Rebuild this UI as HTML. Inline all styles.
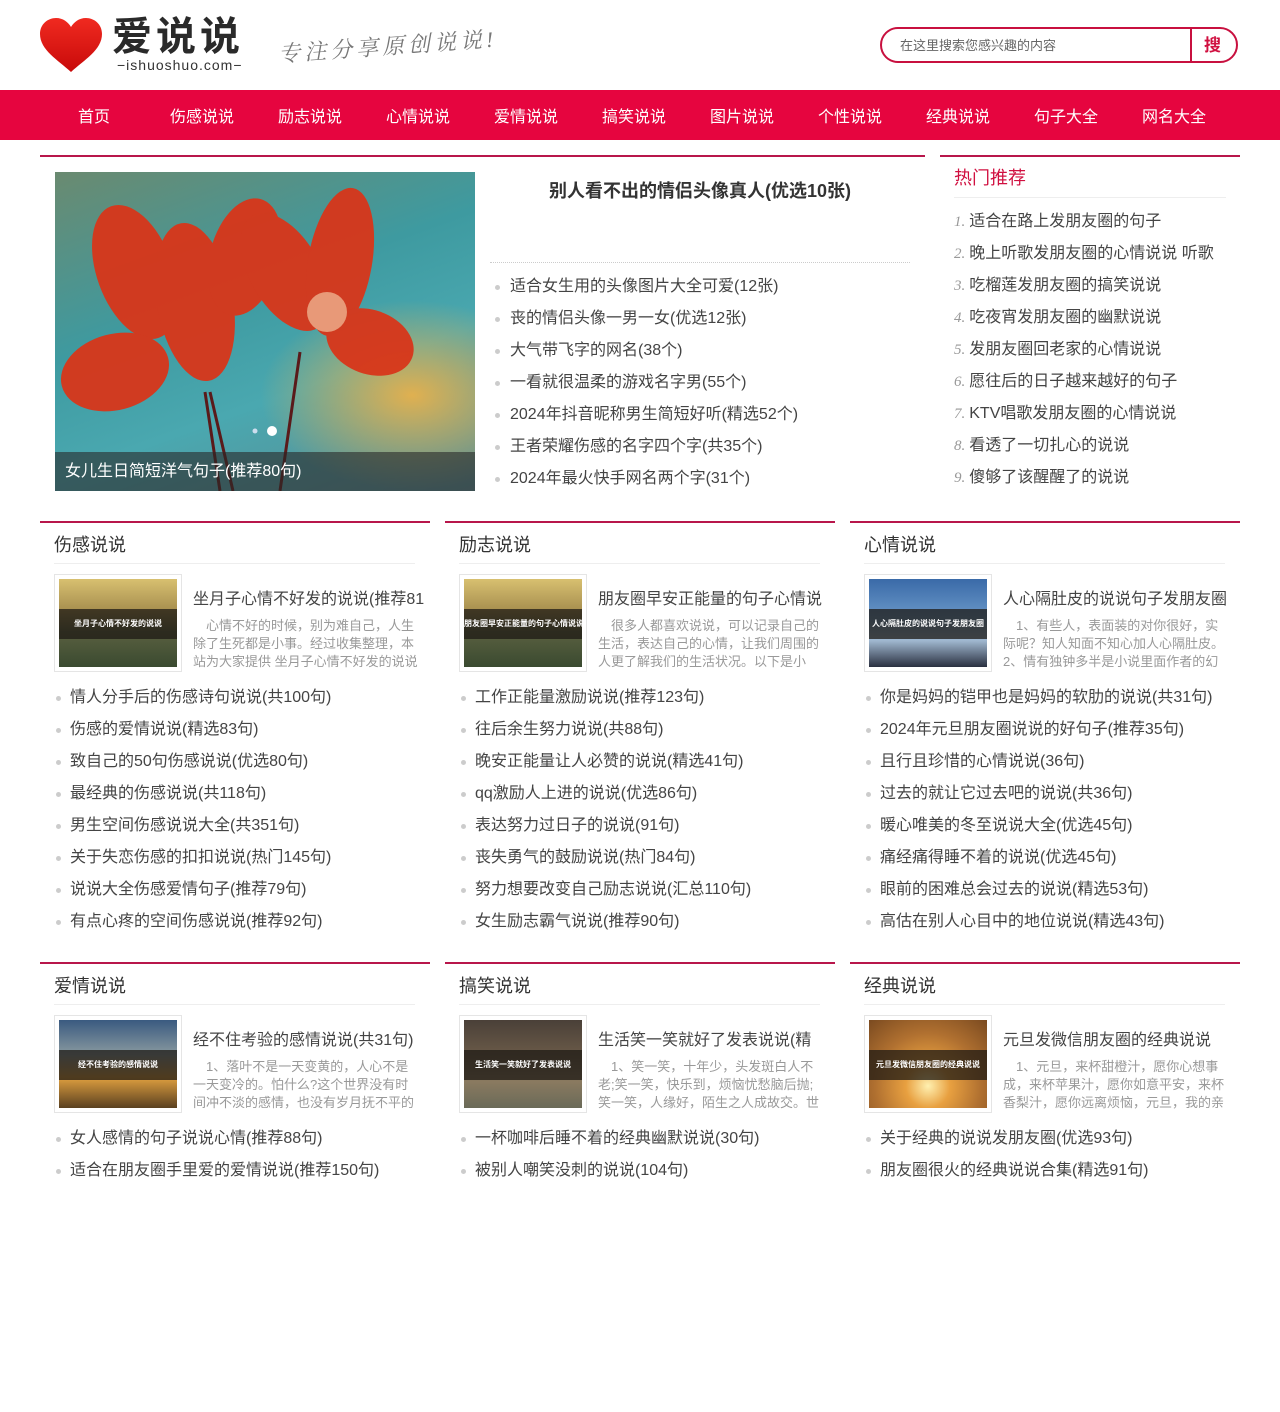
<!DOCTYPE html>
<html><head><meta charset="utf-8"><style>
*{margin:0;padding:0;box-sizing:border-box}
body{width:1280px;height:1167px;overflow:hidden;background:#fff;font-family:"Liberation Sans","Noto Sans CJK SC",sans-serif;color:#444;position:relative}
.a{position:absolute;white-space:nowrap}
.nav{position:absolute;left:0;top:90px;width:1280px;height:50px;background:#e6053f}
.nav span{position:absolute;top:3px;line-height:50px;color:#fff;font-size:16px;transform:translateX(-50%)}
.sec{position:absolute;width:390px;height:450px;border-top:2px solid #b8164b;overflow:hidden}
.sec h3{position:absolute;left:14px;top:10px;font-size:18px;font-weight:normal;color:#333;line-height:24px}
.sec .dv{position:absolute;left:14px;top:40px;width:361px;height:1px;background:#eee}
.th{position:absolute;left:14px;top:51px;width:128px;height:98px;border:1px solid #e5e5e5;padding:4px}
.th div{width:100%;height:100%;position:relative;overflow:hidden}
.th b{position:absolute;left:0;right:0;top:30px;height:30px;background:rgba(30,25,20,.75);color:#fff;font-size:8px;line-height:30px;text-align:center;font-weight:bold;white-space:nowrap;overflow:hidden}
.sec .t{position:absolute;left:153px;top:62px;font-size:16px;color:#444;width:232px;overflow:hidden;white-space:nowrap}
.sec .d{position:absolute;left:153px;top:94px;width:228px;font-size:13px;line-height:18px;color:#999;height:54px;overflow:hidden}
.sec ul{position:absolute;left:14px;top:159px;list-style:none}
.sec li{height:32px;line-height:32px;font-size:16px;color:#444;padding-left:16px;position:relative;white-space:nowrap}
.sec li:before{content:"";position:absolute;left:2px;top:14px;width:5px;height:5px;border-radius:50%;background:#ccc}
.ml li{height:32px;line-height:32px;font-size:16px;color:#444;padding-left:20px;position:relative;list-style:none;white-space:nowrap}
.ml li:before{content:"";position:absolute;left:5px;top:14px;width:5px;height:5px;border-radius:50%;background:#ccc}
.hl li{list-style:none;height:32px;line-height:32px;font-size:16px;color:#444;white-space:nowrap}
.hl i{font-family:"Liberation Serif",serif;color:#999;font-size:15px;margin-right:4px}
</style></head><body>
<svg class="a" style="left:38px;top:16px" width="66" height="58" viewBox="0 0 66 58"><defs><linearGradient id="hg" x1="0" y1="0" x2="0" y2="1"><stop offset="0" stop-color="#f02a20"/><stop offset="1" stop-color="#c80a0a"/></linearGradient></defs><path d="M33 56 C20 44 2 34 2 18 C2 8 10 2 18 2 C25 2 30 6 33 11 C36 6 41 2 48 2 C56 2 64 8 64 18 C64 34 46 44 33 56Z" fill="url(#hg)"/></svg>
<div class="a" style="left:112px;top:14px;font-size:40px;font-weight:bold;color:#2a2a2a;letter-spacing:4px;line-height:46px">爱说说</div>
<div class="a" style="left:117px;top:57px;font-size:14px;color:#333;line-height:16px;letter-spacing:1px">−ishuoshuo.com−</div>
<div class="a" style="left:278px;top:30px;font-size:22px;color:#777;font-style:italic;letter-spacing:4px;transform:rotate(-4deg);font-family:'Liberation Serif','Noto Serif CJK SC',serif">专注分享原创说说!</div>
<div class="a" style="left:880px;top:27px;width:358px;height:36px;border:2px solid #c8103f;border-radius:18px"></div>
<div class="a" style="left:1190px;top:29px;width:2px;height:32px;background:#c8103f"></div>
<div class="a" style="left:900px;top:37px;font-size:13px;color:#666;line-height:18px">在这里搜索您感兴趣的内容</div>
<div class="a" style="left:1204px;top:35px;font-size:17px;color:#d01040;font-weight:bold;line-height:22px">搜</div>
<div class="nav">
<span style="left:94px">首页</span><span style="left:202px">伤感说说</span><span style="left:310px">励志说说</span><span style="left:418px">心情说说</span><span style="left:526px">爱情说说</span><span style="left:634px">搞笑说说</span><span style="left:742px">图片说说</span><span style="left:850px">个性说说</span><span style="left:958px">经典说说</span><span style="left:1066px">句子大全</span><span style="left:1174px">网名大全</span>
</div>
<div class="a" style="left:40px;top:155px;width:885px;height:2px;background:#b8164b"></div>
<div class="a" style="left:940px;top:155px;width:300px;height:2px;background:#b8164b"></div>
<div class="a" style="left:55px;top:172px;width:420px;height:319px;overflow:hidden;background:radial-gradient(ellipse at 85% 70%,#e0b050 0,rgba(224,176,80,0) 30%),linear-gradient(160deg,#6a8a70 0%,#3e9aa0 40%,#4aa8b0 65%,#5a8a90 100%)">
<svg width="420" height="319" style="position:absolute;left:0;top:0"><g fill="#d8361a" opacity=".95"><ellipse cx="80" cy="100" rx="38" ry="70" transform="rotate(-20 80 100)"/><ellipse cx="140" cy="130" rx="38" ry="80" transform="rotate(-10 140 130)"/><ellipse cx="190" cy="85" rx="35" ry="60" transform="rotate(15 190 85)"/><ellipse cx="230" cy="100" rx="35" ry="65" transform="rotate(-30 230 100)"/><ellipse cx="285" cy="90" rx="32" ry="75" transform="rotate(10 285 90)"/><ellipse cx="315" cy="170" rx="45" ry="32" transform="rotate(20 315 170)"/><ellipse cx="60" cy="200" rx="55" ry="38" transform="rotate(-15 60 200)"/></g><path d="M150 220 L165 319 M155 220 L178 319 M245 180 L225 319" stroke="#5a1a1a" stroke-width="3"/><circle cx="272" cy="140" r="20" fill="#fff8d0" opacity=".5"/><circle cx="217" cy="259" r="5" fill="#fff"/><circle cx="200" cy="259" r="2.5" fill="#cde"/></svg>
<div style="position:absolute;left:0;bottom:0;width:420px;height:39px;background:rgba(40,40,40,.6);color:#fff;font-size:16px;line-height:39px;padding-left:10px">女儿生日简短洋气句子(推荐80句)</div>
</div>
<div class="a" style="left:490px;top:178px;width:420px;text-align:center;font-size:18px;font-weight:bold;color:#333;line-height:26px">别人看不出的情侣头像真人(优选10张)</div>
<div class="a" style="left:490px;top:262px;width:420px;border-top:1px dotted #ccc"></div>
<ul class="a ml" style="left:490px;top:271px">
<li>适合女生用的头像图片大全可爱(12张)</li><li>丧的情侣头像一男一女(优选12张)</li><li>大气带飞字的网名(38个)</li><li>一看就很温柔的游戏名字男(55个)</li><li>2024年抖音昵称男生简短好听(精选52个)</li><li>王者荣耀伤感的名字四个字(共35个)</li><li>2024年最火快手网名两个字(31个)</li>
</ul>
<div class="a" style="left:954px;top:165px;font-size:18px;color:#d01040;line-height:26px">热门推荐</div>
<div class="a" style="left:954px;top:197px;width:272px;height:1px;background:#eee"></div>
<ul class="a hl" style="left:954px;top:206px">
<li><i>1.</i>适合在路上发朋友圈的句子</li><li><i>2.</i>晚上听歌发朋友圈的心情说说 听歌</li><li><i>3.</i>吃榴莲发朋友圈的搞笑说说</li><li><i>4.</i>吃夜宵发朋友圈的幽默说说</li><li><i>5.</i>发朋友圈回老家的心情说说</li><li><i>6.</i>愿往后的日子越来越好的句子</li><li><i>7.</i>KTV唱歌发朋友圈的心情说说</li><li><i>8.</i>看透了一切扎心的说说</li><li><i>9.</i>傻够了该醒醒了的说说</li>
</ul>
<div class="sec" style="left:40px;top:521px"><h3>伤感说说</h3><div class="dv"></div>
<div class="th"><div style="background:linear-gradient(180deg,#d8c070 0%,#a89050 35%,#5a6040 60%,#3a4a30 100%)"><b>坐月子心情不好发的说说</b></div></div>
<div class="t">坐月子心情不好发的说说(推荐81</div>
<div class="d">　心情不好的时候，别为难自己，人生除了生死都是小事。经过收集整理，本站为大家提供 坐月子心情不好发的说说</div>
<ul><li>情人分手后的伤感诗句说说(共100句)</li><li>伤感的爱情说说(精选83句)</li><li>致自己的50句伤感说说(优选80句)</li><li>最经典的伤感说说(共118句)</li><li>男生空间伤感说说大全(共351句)</li><li>关于失恋伤感的扣扣说说(热门145句)</li><li>说说大全伤感爱情句子(推荐79句)</li><li>有点心疼的空间伤感说说(推荐92句)</li></ul></div>
<div class="sec" style="left:445px;top:521px"><h3>励志说说</h3><div class="dv"></div>
<div class="th"><div style="background:linear-gradient(180deg,#d8c070 0%,#a89050 35%,#5a6040 60%,#3a4a30 100%)"><b>朋友圈早安正能量的句子心情说说</b></div></div>
<div class="t">朋友圈早安正能量的句子心情说</div>
<div class="d">　很多人都喜欢说说，可以记录自己的生活，表达自己的心情，让我们周围的人更了解我们的生活状况。以下是小</div>
<ul><li>工作正能量激励说说(推荐123句)</li><li>往后余生努力说说(共88句)</li><li>晚安正能量让人必赞的说说(精选41句)</li><li>qq激励人上进的说说(优选86句)</li><li>表达努力过日子的说说(91句)</li><li>丧失勇气的鼓励说说(热门84句)</li><li>努力想要改变自己励志说说(汇总110句)</li><li>女生励志霸气说说(推荐90句)</li></ul></div>
<div class="sec" style="left:850px;top:521px"><h3>心情说说</h3><div class="dv"></div>
<div class="th"><div style="background:linear-gradient(180deg,#3a6aa8 0%,#6a98c8 45%,#a0b8d0 70%,#2a3040 100%)"><b>人心隔肚皮的说说句子发朋友圈</b></div></div>
<div class="t">人心隔肚皮的说说句子发朋友圈</div>
<div class="d">　1、有些人，表面装的对你很好，实际呢？知人知面不知心加人心隔肚皮。2、情有独钟多半是小说里面作者的幻</div>
<ul><li>你是妈妈的铠甲也是妈妈的软肋的说说(共31句)</li><li>2024年元旦朋友圈说说的好句子(推荐35句)</li><li>且行且珍惜的心情说说(36句)</li><li>过去的就让它过去吧的说说(共36句)</li><li>暖心唯美的冬至说说大全(优选45句)</li><li>痛经痛得睡不着的说说(优选45句)</li><li>眼前的困难总会过去的说说(精选53句)</li><li>高估在别人心目中的地位说说(精选43句)</li></ul></div>
<div class="sec" style="left:40px;top:962px"><h3>爱情说说</h3><div class="dv"></div>
<div class="th"><div style="background:linear-gradient(180deg,#3a5a80 0%,#8a9aa0 40%,#e0a040 65%,#5a4020 100%)"><b>经不住考验的感情说说</b></div></div>
<div class="t">经不住考验的感情说说(共31句)</div>
<div class="d">　1、落叶不是一天变黄的，人心不是一天变冷的。怕什么?这个世界没有时间冲不淡的感情，也没有岁月抚不平的伤</div>
<ul><li>女人感情的句子说说心情(推荐88句)</li><li>适合在朋友圈手里爱的爱情说说(推荐150句)</li></ul></div>
<div class="sec" style="left:445px;top:962px"><h3>搞笑说说</h3><div class="dv"></div>
<div class="th"><div style="background:linear-gradient(180deg,#4a4038 0%,#6a5a48 40%,#8a7a60 70%,#6a6a58 100%)"><b>生活笑一笑就好了发表说说</b></div></div>
<div class="t">生活笑一笑就好了发表说说(精</div>
<div class="d">　1、笑一笑，十年少，头发斑白人不老;笑一笑，快乐到，烦恼忧愁脑后抛;笑一笑，人缘好，陌生之人成故交。世界</div>
<ul><li>一杯咖啡后睡不着的经典幽默说说(30句)</li><li>被别人嘲笑没刺的说说(104句)</li></ul></div>
<div class="sec" style="left:850px;top:962px"><h3>经典说说</h3><div class="dv"></div>
<div class="th"><div style="background:radial-gradient(circle at 50% 75%,#fff0b0 0,#e8a040 25%,#b07030 60%,#7a4a20 100%)"><b>元旦发微信朋友圈的经典说说</b></div></div>
<div class="t">元旦发微信朋友圈的经典说说</div>
<div class="d">　1、元旦，来杯甜橙汁，愿你心想事成，来杯苹果汁，愿你如意平安，来杯香梨汁，愿你远离烦恼，元旦，我的亲</div>
<ul><li>关于经典的说说发朋友圈(优选93句)</li><li>朋友圈很火的经典说说合集(精选91句)</li></ul></div>
</body></html>
